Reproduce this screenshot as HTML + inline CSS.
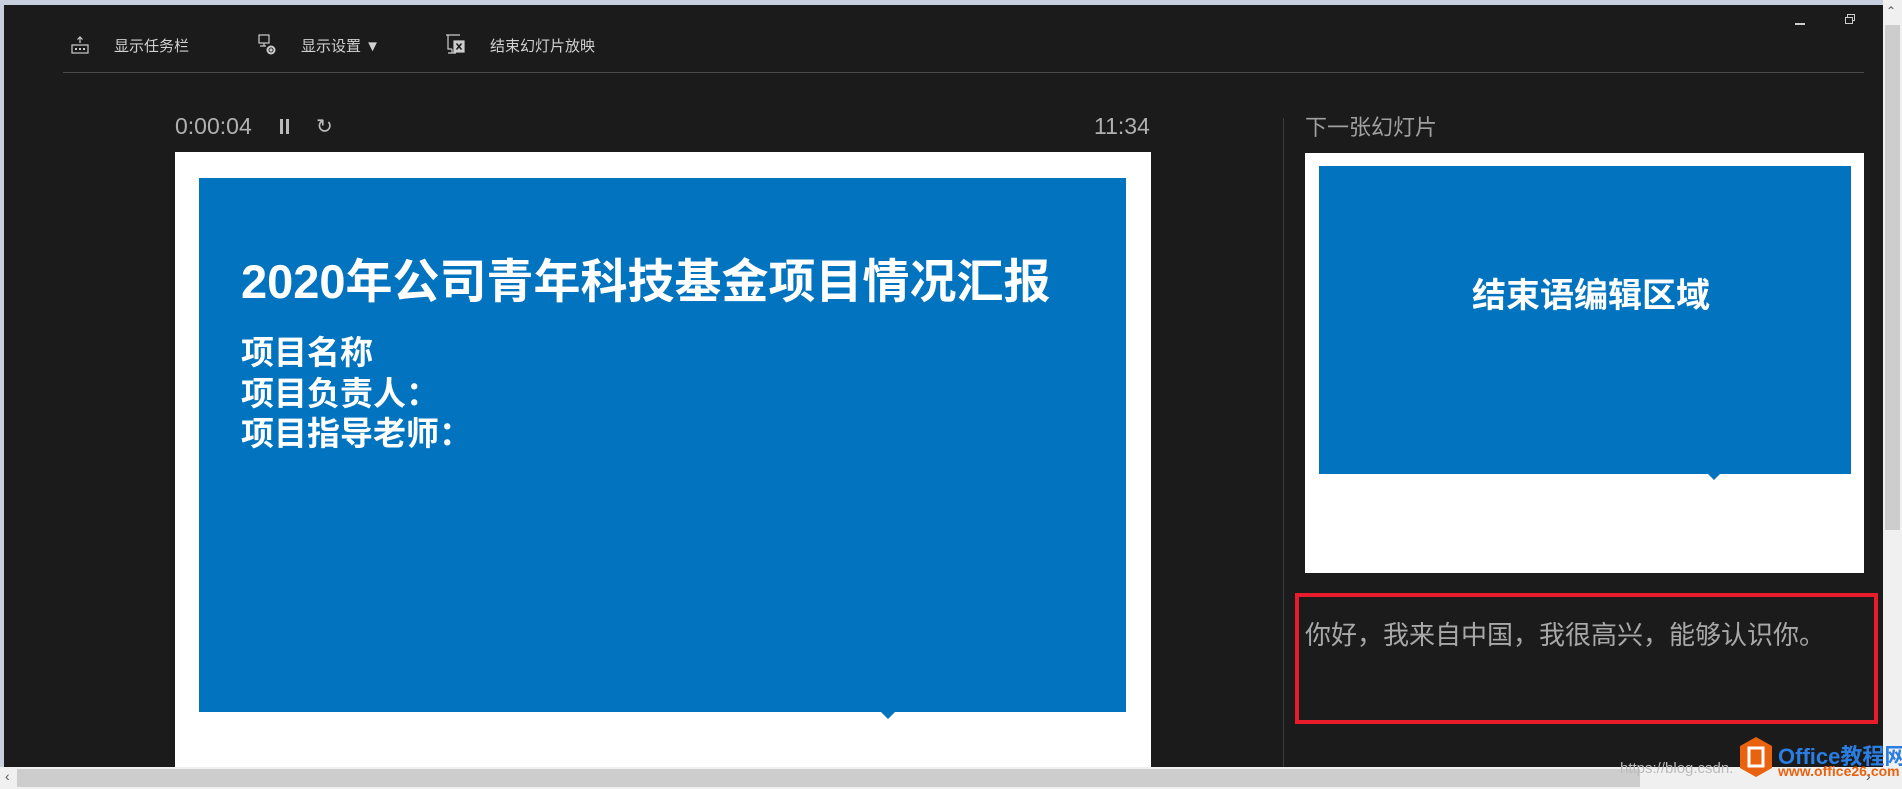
<!DOCTYPE html>
<html><head><meta charset="utf-8">
<style>
*{margin:0;padding:0;box-sizing:border-box}
html,body{width:1902px;height:789px;overflow:hidden}
body{background:#c8d0e0;position:relative;font-family:"Liberation Sans","Noto Sans CJK SC",sans-serif}
.app{position:absolute;left:4px;top:5px;width:1879px;height:762px;background:#1b1b1b}
.a{position:absolute;white-space:nowrap}
.tb{color:#d0d0d0;font-size:15px;top:35px}
.blue{background:#0173bf}
.w{color:#fff;font-weight:bold;font-family:"Liberation Sans","Noto Sans CJK SC",sans-serif}
</style></head><body>
<div class="app"></div>
<svg class="a" style="left:70px;top:36px" width="20" height="20" viewBox="0 0 20 20" fill="none" stroke="#ccc" stroke-width="1.2"><path d="M10 1v6M7.5 3.5L10 1l2.5 2.5"/><rect x="2" y="9" width="16" height="8"/><path d="M5 13h2M9 13h2M13 13h2" stroke-width="2"/></svg>
<div class="a tb" style="left:114px">显示任务栏</div>
<svg class="a" style="left:257px;top:34px" width="22" height="22" viewBox="0 0 22 22" fill="none" stroke="#ccc" stroke-width="1.2"><rect x="2" y="1" width="10" height="8"/><path d="M7 9v3M3 12h6"/><circle cx="14" cy="16" r="3.5" stroke-width="2"/><circle cx="14" cy="16" r="1" fill="#ccc"/></svg>
<div class="a tb" style="left:301px">显示设置 ▼</div>
<svg class="a" style="left:445px;top:33px" width="22" height="22" viewBox="0 0 22 22" fill="none" stroke="#ccc" stroke-width="1.2"><path d="M1 2h14M3 2v14h4M7 16v4M3 20h8"/><rect x="9" y="8" width="10" height="11" fill="#ccc"/><path d="M11.5 10.5l5 6M16.5 10.5l-5 6" stroke="#1b1b1b" stroke-width="1.5"/></svg>
<div class="a tb" style="left:490px">结束幻灯片放映</div>
<div class="a" style="left:1795px;top:23px;width:10px;height:1.5px;background:#ccc"></div>
<svg class="a" style="left:1844px;top:13px" width="12" height="12" viewBox="0 0 12 12" fill="none" stroke="#ccc"><rect x="1.5" y="4.5" width="7" height="6"/><path d="M3.5 4.5V1.5h7v6h-2"/></svg>
<div class="a" style="left:63px;top:72px;width:1801px;height:1px;background:#4a4a4a"></div>
<div class="a" style="left:175px;top:113px;color:#b0b0b0;font-size:23px">0:00:04</div>
<div class="a" style="left:280px;top:119px;width:3px;height:15px;background:#bbb"></div>
<div class="a" style="left:286px;top:119px;width:3px;height:15px;background:#bbb"></div>
<div class="a" style="left:316px;top:114px;color:#bbb;font-size:20px">↻</div>
<div class="a" style="left:1094px;top:113px;color:#b0b0b0;font-size:23px">11:34</div>
<div class="a" style="left:175px;top:152px;width:976px;height:615px;background:#fff"></div>
<div class="a blue" style="left:199px;top:178px;width:927px;height:534px"></div>
<div class="a" style="left:880px;top:711px;width:0;height:0;border-left:8px solid transparent;border-right:8px solid transparent;border-top:8px solid #0173bf"></div>
<div class="a w" style="left:241px;top:252px;font-size:47px;line-height:60px">2020年公司青年科技基金项目情况汇报</div>
<div class="a w" style="left:241px;top:333px;font-size:33px;line-height:40.5px;white-space:normal">项目名称<br>项目负责人：<br>项目指导老师：</div>
<div class="a" style="left:1283px;top:118px;width:1px;height:649px;background:#3c3c3c"></div>
<div class="a" style="left:1305px;top:110px;color:#a0a0a0;font-size:22px">下一张幻灯片</div>
<div class="a" style="left:1305px;top:153px;width:559px;height:420px;background:#fff"></div>
<div class="a blue" style="left:1319px;top:166px;width:532px;height:308px"></div>
<div class="a" style="left:1707px;top:473px;width:0;height:0;border-left:7px solid transparent;border-right:7px solid transparent;border-top:7px solid #0173bf"></div>
<div class="a w" style="left:1325px;width:532px;text-align:center;top:274px;font-size:34px;line-height:44px">结束语编辑区域</div>
<div class="a" style="left:1295px;top:593px;width:583px;height:131px;border:4px solid #e81c2a"></div>
<div class="a" style="left:1305px;top:615px;color:#a8a8a8;font-size:26px">你好，我来自中国，我很高兴，能够认识你。</div>
<div class="a" style="left:1883px;top:0;width:19px;height:789px;background:#f0f0f0"></div>
<div class="a" style="left:1885px;top:25px;width:15px;height:505px;background:#cdcdcd"></div>
<div class="a" style="left:1886px;top:4px;color:#555;font-size:12px">&#8963;</div>
<div class="a" style="left:0;top:767px;width:1883px;height:22px;background:#f0f0f0"></div>
<div class="a" style="left:17px;top:769px;width:1623px;height:18px;background:#cdcdcd"></div>
<div class="a" style="left:5px;top:768px;color:#555;font-size:14px">‹</div>
<div class="a" style="left:1866px;top:768px;color:#555;font-size:14px">›</div>
<div class="a" style="left:1620px;top:760px;color:#bbb;font-size:15px">https://blog.csdn.</div>
<svg class="a" style="left:1740px;top:737px" width="32" height="40" viewBox="0 0 32 40"><polygon points="16,0 32,9 32,31 16,40 0,31 0,9" fill="#e8620f"/><rect x="9" y="11" width="14" height="18" fill="none" stroke="#fff" stroke-width="3"/></svg>
<div class="a" style="left:1778px;top:739px;color:#2a7de1;font-size:22px;font-weight:bold">Office教程网</div>
<div class="a" style="left:1778px;top:763px;color:#e8620f;font-size:14px;font-weight:bold">www.office26.com</div>
</body></html>
